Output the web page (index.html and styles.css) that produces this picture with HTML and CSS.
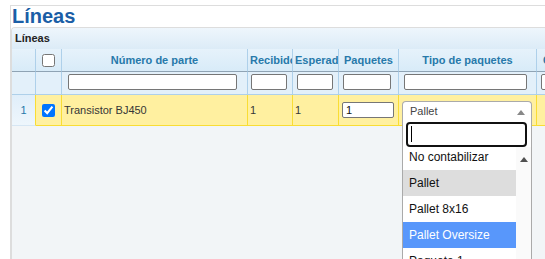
FILE: index.html
```html
<!DOCTYPE html>
<html lang="es">
<head>
    <meta charset="UTF-8">
    <meta name="viewport" content="width=device-width, initial-scale=1.0">
    <title>Líneas</title>
    <link rel="stylesheet" href="styles.css">
</head>
<body>

<div class="page">
    <h1 class="page-title">Líneas</h1>

    <div class="panel">
        <div class="caption">Líneas</div>

        <div class="grid-wrap">
            <table class="grid">
                <thead>
                    <tr class="head-row">
                        <th class="c-rn"></th>
                        <th class="c-cb"><input type="checkbox"></th>
                        <th class="c-num">Número de parte</th>
                        <th class="c-rec">Recibido</th>
                        <th class="c-esp">Esperado</th>
                        <th class="c-paq">Paquetes</th>
                        <th class="c-tipo">Tipo de paquetes</th>
                        <th class="c-com">Comentarios</th>
                    </tr>
                    <tr class="filter-row">
                        <th></th>
                        <th></th>
                        <th><input class="filter f-num" type="text"></th>
                        <th><input class="filter f-rec" type="text"></th>
                        <th><input class="filter f-esp" type="text"></th>
                        <th><input class="filter f-paq" type="text"></th>
                        <th><input class="filter f-tipo" type="text"></th>
                        <th><input class="filter f-com" type="text"></th>
                    </tr>
                </thead>
                <tbody>
                    <tr class="data-row">
                        <td class="rn">1</td>
                        <td class="cb"><input type="checkbox" checked></td>
                        <td>Transistor BJ450</td>
                        <td>1</td>
                        <td>1</td>
                        <td><input class="qty" type="text" value="1"></td>
                        <td>
                            <div class="select-box">
                                <span>Pallet</span>
                                <b class="arrow"></b>
                            </div>
                        </td>
                        <td></td>
                    </tr>
                </tbody>
            </table>

            <!-- open select2 dropdown for "Tipo de paquetes" -->
            <div class="dropdown">
                <div class="search">
                    <div class="search-box"><span class="caret"></span></div>
                </div>
                <div class="results">
                    <ul class="options">
                        <li>No contabilizar</li>
                        <li class="selected">Pallet</li>
                        <li>Pallet 8x16</li>
                        <li class="highlighted">Pallet Oversize</li>
                        <li>Paquete 1</li>
                        <li>Paquete 2</li>
                    </ul>
                    <div class="scrollbar"><b class="scroll-up"></b></div>
                </div>
            </div>
        </div>
    </div>
</div>

</body>
</html>
```

FILE: styles.css
```css
* {
    margin: 0;
    padding: 0;
    box-sizing: border-box;
}

html, body {
    overflow: hidden;
}

body {
    background: white;
    font-family: "Liberation Sans", Arial, sans-serif;
    color: #363636;
}

.page {
    margin: 5px 0 0 10px;
    width: 700px;
    border-top: 1px solid #ddd;
    border-left: 1px solid #ddd;
}

.page-title {
    font-size: 20px;
    line-height: 20px;
    font-weight: bold;
    color: #1b5ea6;
    padding: 0 0 1px 1px;
}

.panel {
    border: 1px solid #ddd;
    border-right: none;
    border-top-left-radius: 4px;
    background: #f2f5f7;
    min-height: 300px;
    overflow: hidden;
}

.caption {
    height: 21px;
    line-height: 21px;
    padding-left: 3px;
    font-size: 11px;
    font-weight: bold;
    color: #222;
    background: linear-gradient(#eef6fc, #dcebf7);
}

.grid-wrap {
    position: relative;
}

.grid {
    border-collapse: separate;
    border-spacing: 0;
    table-layout: fixed;
    width: 605px;
    font-size: 11px;
}

.grid th, .grid td {
    border-right: 1px solid #aed0ea;
    padding: 0 2px;
    overflow: hidden;
    white-space: nowrap;
}

.c-rn { width: 24px; }
.c-cb { width: 26px; }
.c-num { width: 186px; }
.c-rec { width: 45px; }
.c-esp { width: 46px; }
.c-paq { width: 60px; }
.c-tipo { width: 138px; }
.c-com { width: 80px; }

.head-row th {
    height: 23px;
    background: linear-gradient(#e6f2fb, #d8ebf8);
    border-bottom: 1px solid #8fa3b4;
    color: #2779aa;
    font-weight: bold;
    text-align: center;
}

.head-row input[type="checkbox"] {
    display: block;
    margin: 1px auto 0;
    width: 13px;
    height: 13px;
}

.filter-row th {
    height: 23px;
    background: #e3f0fa;
    border-bottom: 1px solid #aed0ea;
    text-align: left;
    vertical-align: top;
}

.filter {
    display: block;
    height: 16px;
    margin-top: 2px;
    border: 1px solid #767676;
    border-radius: 2px;
    background: white;
}

.f-num { width: 169px; margin-left: 4px; }
.f-rec { width: 36px; margin-left: 1px; }
.f-esp { width: 36px; margin-left: 2px; }
.f-paq { width: 48px; margin-left: 2px; }
.f-tipo { width: 123px; margin-left: 3px; }
.f-com { width: 70px; margin-left: 2px; }

.data-row td {
    height: 31px;
    background: #fff0a0;
    border-right-color: #f9dd34;
    border-bottom: 1px solid #f9dd34;
    color: #363636;
    vertical-align: middle;
}

.data-row td.rn {
    background: linear-gradient(#e0eefa, #eef6fc);
    border-bottom-color: #d6e6f3;
    color: #2779aa;
    text-align: center;
}

.data-row td.cb input {
    display: block;
    width: 13px;
    height: 13px;
    margin: 0 auto;
}

.qty {
    display: block;
    width: 52px;
    height: 16px;
    margin-left: 1px;
    padding-left: 3px;
    border: 1px solid #767676;
    border-radius: 2px;
    font-family: "Liberation Sans", Arial, sans-serif;
    font-size: 11px;
    color: #111;
    background: white;
}

.select-box {
    position: relative;
    width: 130px;
    height: 20px;
    margin: 1px 0 0 1px;
    padding-left: 7px;
    line-height: 19px;
    border: 1px solid #aaa;
    border-bottom: none;
    border-radius: 4px 4px 0 0;
    background: white;
    color: #444;
    font-size: 11px;
}

.arrow {
    position: absolute;
    right: 6px;
    top: 8px;
    border-left: 4px solid transparent;
    border-right: 4px solid transparent;
    border-bottom: 5px solid #888;
}

.dropdown {
    position: absolute;
    left: 390px;
    top: 70px;
    width: 130px;
    height: 200px;
    background: white;
    border: 1px solid #aaa;
    border-top: none;
    z-index: 10;
}

.search {
    padding: 3px 4px 0 3px;
}

.search-box {
    height: 25px;
    border: 2px solid #111;
    border-radius: 4px;
    padding: 2px 0 0 3px;
}

.caret {
    display: block;
    width: 1px;
    height: 16px;
    background: #000;
}

.results {
    display: flex;
    height: 160px;
    overflow: hidden;
}

.options {
    flex: 1;
    list-style: none;
    margin-top: -3px;
    font-size: 12px;
    color: #111;
}

.options li {
    height: 26px;
    line-height: 26px;
    padding-left: 6px;
    white-space: nowrap;
}

.options li.selected {
    background: #ddd;
}

.options li.highlighted {
    background: #5897fb;
    color: white;
}

.scrollbar {
    width: 15px;
    background: #fafafa;
    padding: 10px 0 0 4px;
}

.scroll-up {
    display: block;
    width: 0;
    border-left: 4px solid transparent;
    border-right: 4px solid transparent;
    border-bottom: 5px solid #505050;
}
```
